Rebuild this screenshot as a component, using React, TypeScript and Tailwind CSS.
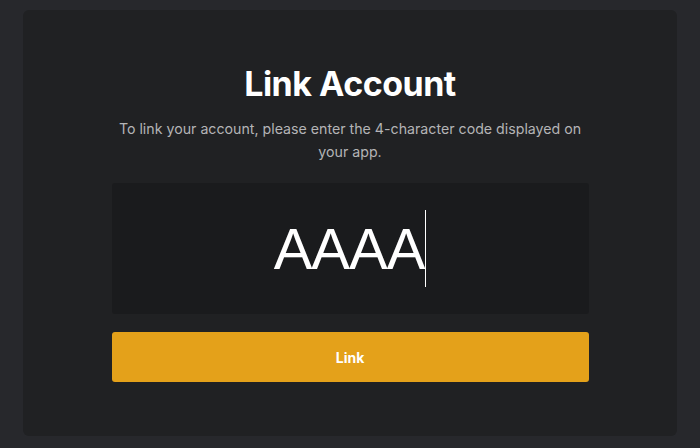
import React from 'react';

export default function App() {
  return (
    <div className="min-h-screen w-full bg-[#27282c] px-[23px] pt-[10px] pb-[12px] font-['Inter',sans-serif]">
      <div className="flex h-[426px] flex-col items-center rounded-md bg-[#202123] pt-[54px]">
        <h1 className="text-[34px] font-bold leading-[40px] tracking-[-0.5px] text-white">Link Account</h1>
        <p className="mt-[13px] w-[472px] text-center text-[14.2px] leading-[23px] text-[#b4b4b6]">
          To link your account, please enter the 4-character code displayed on your app.
        </p>
        <div className="mt-[20px] flex h-[131px] w-[477px] items-center justify-center rounded-[3px] bg-[#1a1b1d]">
          <div className="flex items-center">
            <span className="font-['Liberation_Sans',Arial,sans-serif] text-[58px] leading-none tracking-[-1px] text-white">AAAA</span>
            <span className="ml-[1px] h-[77px] w-px bg-white" />
          </div>
        </div>
        <button className="mt-[18px] h-[50px] w-[477px] rounded-[3px] bg-[#e4a11a] text-[14px] font-bold text-white">
          Link
        </button>
      </div>
    </div>
  );
}
